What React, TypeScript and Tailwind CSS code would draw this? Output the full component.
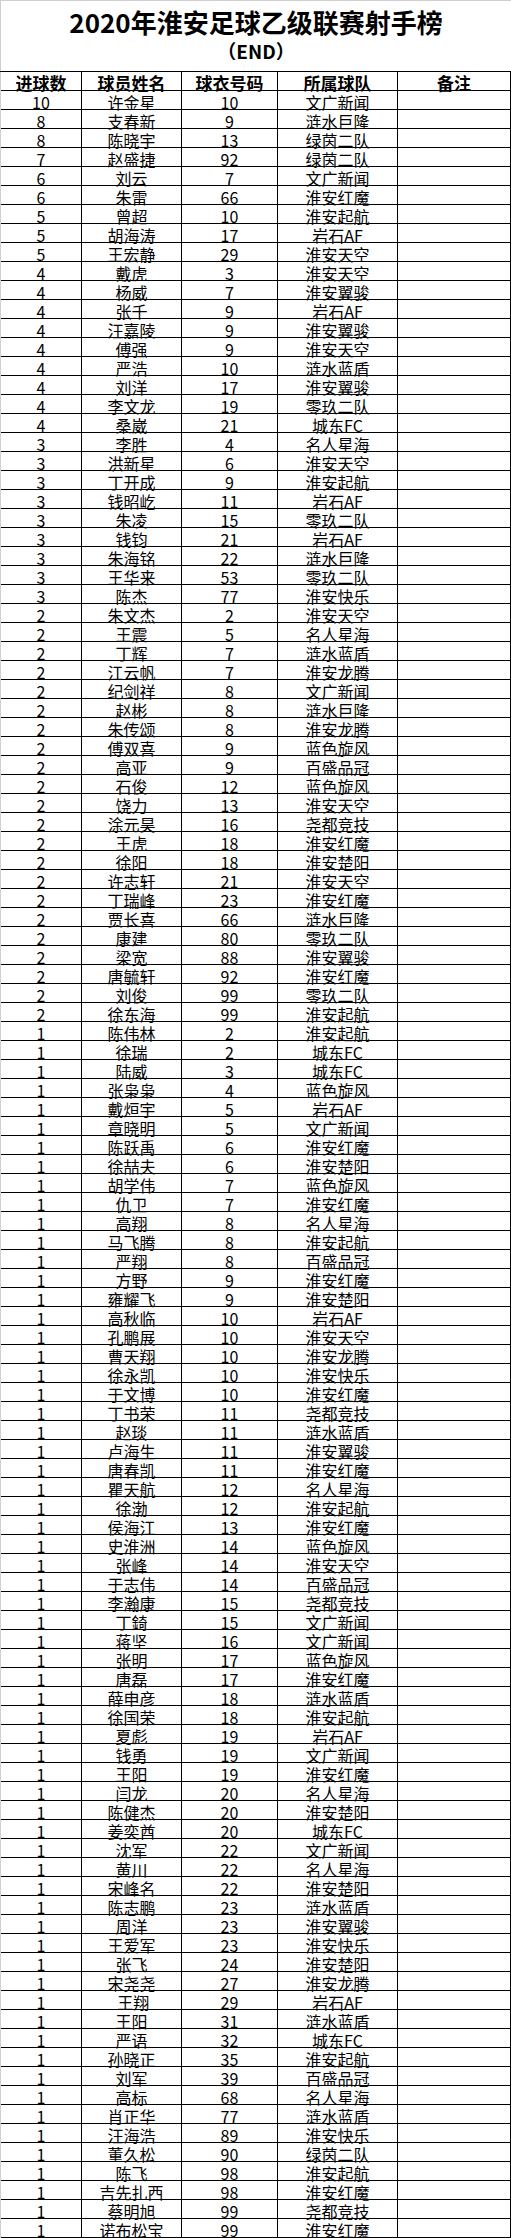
import React from "react";

// goals, name, shirt number, team
const ROWS: [number, string, number, string][] = [
  [10, "许金星", 10, "文广新闻"],
  [8, "支春新", 9, "涟水巨隆"],
  [8, "陈晓宇", 13, "绿茵二队"],
  [7, "赵盛捷", 92, "绿茵二队"],
  [6, "刘云", 7, "文广新闻"],
  [6, "朱雷", 66, "淮安红魔"],
  [5, "曾超", 10, "淮安起航"],
  [5, "胡海涛", 17, "岩石AF"],
  [5, "王宏静", 29, "淮安天空"],
  [4, "戴虎", 3, "淮安天空"],
  [4, "杨威", 7, "淮安翼骏"],
  [4, "张千", 9, "岩石AF"],
  [4, "汪嘉陵", 9, "淮安翼骏"],
  [4, "傅强", 9, "淮安天空"],
  [4, "严浩", 10, "涟水蓝盾"],
  [4, "刘洋", 17, "淮安翼骏"],
  [4, "李文龙", 19, "零玖二队"],
  [4, "桑崴", 21, "城东FC"],
  [3, "李胜", 4, "名人星海"],
  [3, "洪新星", 6, "淮安天空"],
  [3, "丁开成", 9, "淮安起航"],
  [3, "钱昭屹", 11, "岩石AF"],
  [3, "朱凌", 15, "零玖二队"],
  [3, "钱钧", 21, "岩石AF"],
  [3, "朱海铭", 22, "涟水巨隆"],
  [3, "王华来", 53, "零玖二队"],
  [3, "陈杰", 77, "淮安快乐"],
  [2, "朱文杰", 2, "淮安天空"],
  [2, "王震", 5, "名人星海"],
  [2, "丁辉", 7, "涟水蓝盾"],
  [2, "江云帆", 7, "淮安龙腾"],
  [2, "纪剑祥", 8, "文广新闻"],
  [2, "赵彬", 8, "涟水巨隆"],
  [2, "朱传颂", 8, "淮安龙腾"],
  [2, "傅双喜", 9, "蓝色旋风"],
  [2, "高亚", 9, "百盛品冠"],
  [2, "石俊", 12, "蓝色旋风"],
  [2, "饶力", 13, "淮安天空"],
  [2, "涂元昊", 16, "尧都竞技"],
  [2, "王虎", 18, "淮安红魔"],
  [2, "徐阳", 18, "淮安楚阳"],
  [2, "许志轩", 21, "淮安天空"],
  [2, "丁瑞峰", 23, "淮安红魔"],
  [2, "贾长喜", 66, "涟水巨隆"],
  [2, "康建", 80, "零玖二队"],
  [2, "梁宽", 88, "淮安翼骏"],
  [2, "唐毓轩", 92, "淮安红魔"],
  [2, "刘俊", 99, "零玖二队"],
  [2, "徐东海", 99, "淮安起航"],
  [1, "陈伟林", 2, "淮安起航"],
  [1, "徐瑞", 2, "城东FC"],
  [1, "陆威", 3, "城东FC"],
  [1, "张枭枭", 4, "蓝色旋风"],
  [1, "戴烜宇", 5, "岩石AF"],
  [1, "章晓明", 5, "文广新闻"],
  [1, "陈跃禹", 6, "淮安红魔"],
  [1, "徐喆夫", 6, "淮安楚阳"],
  [1, "胡学伟", 7, "蓝色旋风"],
  [1, "仇卫", 7, "淮安红魔"],
  [1, "高翔", 8, "名人星海"],
  [1, "马飞腾", 8, "淮安起航"],
  [1, "严翔", 8, "百盛品冠"],
  [1, "方野", 9, "淮安红魔"],
  [1, "雍耀飞", 9, "淮安楚阳"],
  [1, "高秋临", 10, "岩石AF"],
  [1, "孔鹏展", 10, "淮安天空"],
  [1, "曹天翔", 10, "淮安龙腾"],
  [1, "徐永凯", 10, "淮安快乐"],
  [1, "于文博", 10, "淮安红魔"],
  [1, "丁书荣", 11, "尧都竞技"],
  [1, "赵琰", 11, "涟水蓝盾"],
  [1, "卢海生", 11, "淮安翼骏"],
  [1, "唐春凯", 11, "淮安红魔"],
  [1, "瞿天航", 12, "名人星海"],
  [1, "徐渤", 12, "淮安起航"],
  [1, "侯海江", 13, "淮安红魔"],
  [1, "史淮洲", 14, "蓝色旋风"],
  [1, "张峰", 14, "淮安天空"],
  [1, "于志伟", 14, "百盛品冠"],
  [1, "李瀚康", 15, "尧都竞技"],
  [1, "丁錡", 15, "文广新闻"],
  [1, "蒋坚", 16, "文广新闻"],
  [1, "张明", 17, "蓝色旋风"],
  [1, "唐磊", 17, "淮安红魔"],
  [1, "薛申彦", 18, "涟水蓝盾"],
  [1, "徐国荣", 18, "淮安起航"],
  [1, "夏彪", 19, "岩石AF"],
  [1, "钱勇", 19, "文广新闻"],
  [1, "王阳", 19, "淮安红魔"],
  [1, "闫龙", 20, "名人星海"],
  [1, "陈健杰", 20, "淮安楚阳"],
  [1, "姜奕酋", 20, "城东FC"],
  [1, "沈军", 22, "文广新闻"],
  [1, "黄川", 22, "名人星海"],
  [1, "宋峰名", 22, "淮安楚阳"],
  [1, "陈志鹏", 23, "涟水蓝盾"],
  [1, "周洋", 23, "淮安翼骏"],
  [1, "王爱军", 23, "淮安快乐"],
  [1, "张飞", 24, "淮安楚阳"],
  [1, "宋尧尧", 27, "淮安龙腾"],
  [1, " 王翔", 29, "岩石AF"],
  [1, "王阳", 31, "涟水蓝盾"],
  [1, "严语", 32, "城东FC"],
  [1, "孙晓正", 35, "淮安起航"],
  [1, "刘军", 39, "百盛品冠"],
  [1, "高标", 68, "名人星海"],
  [1, "肖正华", 77, "涟水蓝盾"],
  [1, "汪海浩", 89, "淮安快乐"],
  [1, "董久松", 90, "绿茵二队"],
  [1, "陈飞", 98, "淮安起航"],
  [1, "吉先扎西", 98, "淮安红魔"],
  [1, "蔡明旭", 99, "尧都竞技"],
  [1, "诺布松宝", 99, "淮安红魔"],
];

const HEADERS = ["进球数", "球员姓名", "球衣号码", "所属球队", "备注"];

function Cell({ children, bold = false }: { children?: React.ReactNode; bold?: boolean }) {
  return (
    <div
      className={`flex h-[19px] items-end justify-center whitespace-pre border-r border-b border-black leading-none ${
        bold ? "text-[17px] font-bold" : "text-[16px]"
      }`}
    >
      <span className="translate-y-[1px]">{children}</span>
    </div>
  );
}

export default function App() {
  return (
    <div
      className="w-[511px] bg-white text-black"
      style={{ fontFamily: '"Noto Sans CJK SC", "Noto Sans", sans-serif' }}
    >
      <div className="flex h-[71px] flex-col items-center border-t border-l border-[#cfcfcf] pt-[6px]">
        <div className="text-[26px] font-bold leading-[30px]">2020年淮安足球乙级联赛射手榜</div>
        <div className="mt-[2px] text-[19px] font-bold leading-[24px]">（END）</div>
      </div>
      <div className="grid grid-cols-[82px_100px_96px_120px_113px] border-t border-black">
        {HEADERS.map((h, i) => (
          <div key={h} className={i === 0 ? "border-l border-[#cfcfcf]" : ""}>
            <Cell bold>{h}</Cell>
          </div>
        ))}
        {ROWS.map(([goals, name, num, team], r) => (
          <React.Fragment key={r}>
            <div className="border-l border-[#cfcfcf]">
              <Cell>{goals}</Cell>
            </div>
            <Cell>{name}</Cell>
            <Cell>{num}</Cell>
            <Cell>{team}</Cell>
            <Cell />
          </React.Fragment>
        ))}
      </div>
    </div>
  );
}
